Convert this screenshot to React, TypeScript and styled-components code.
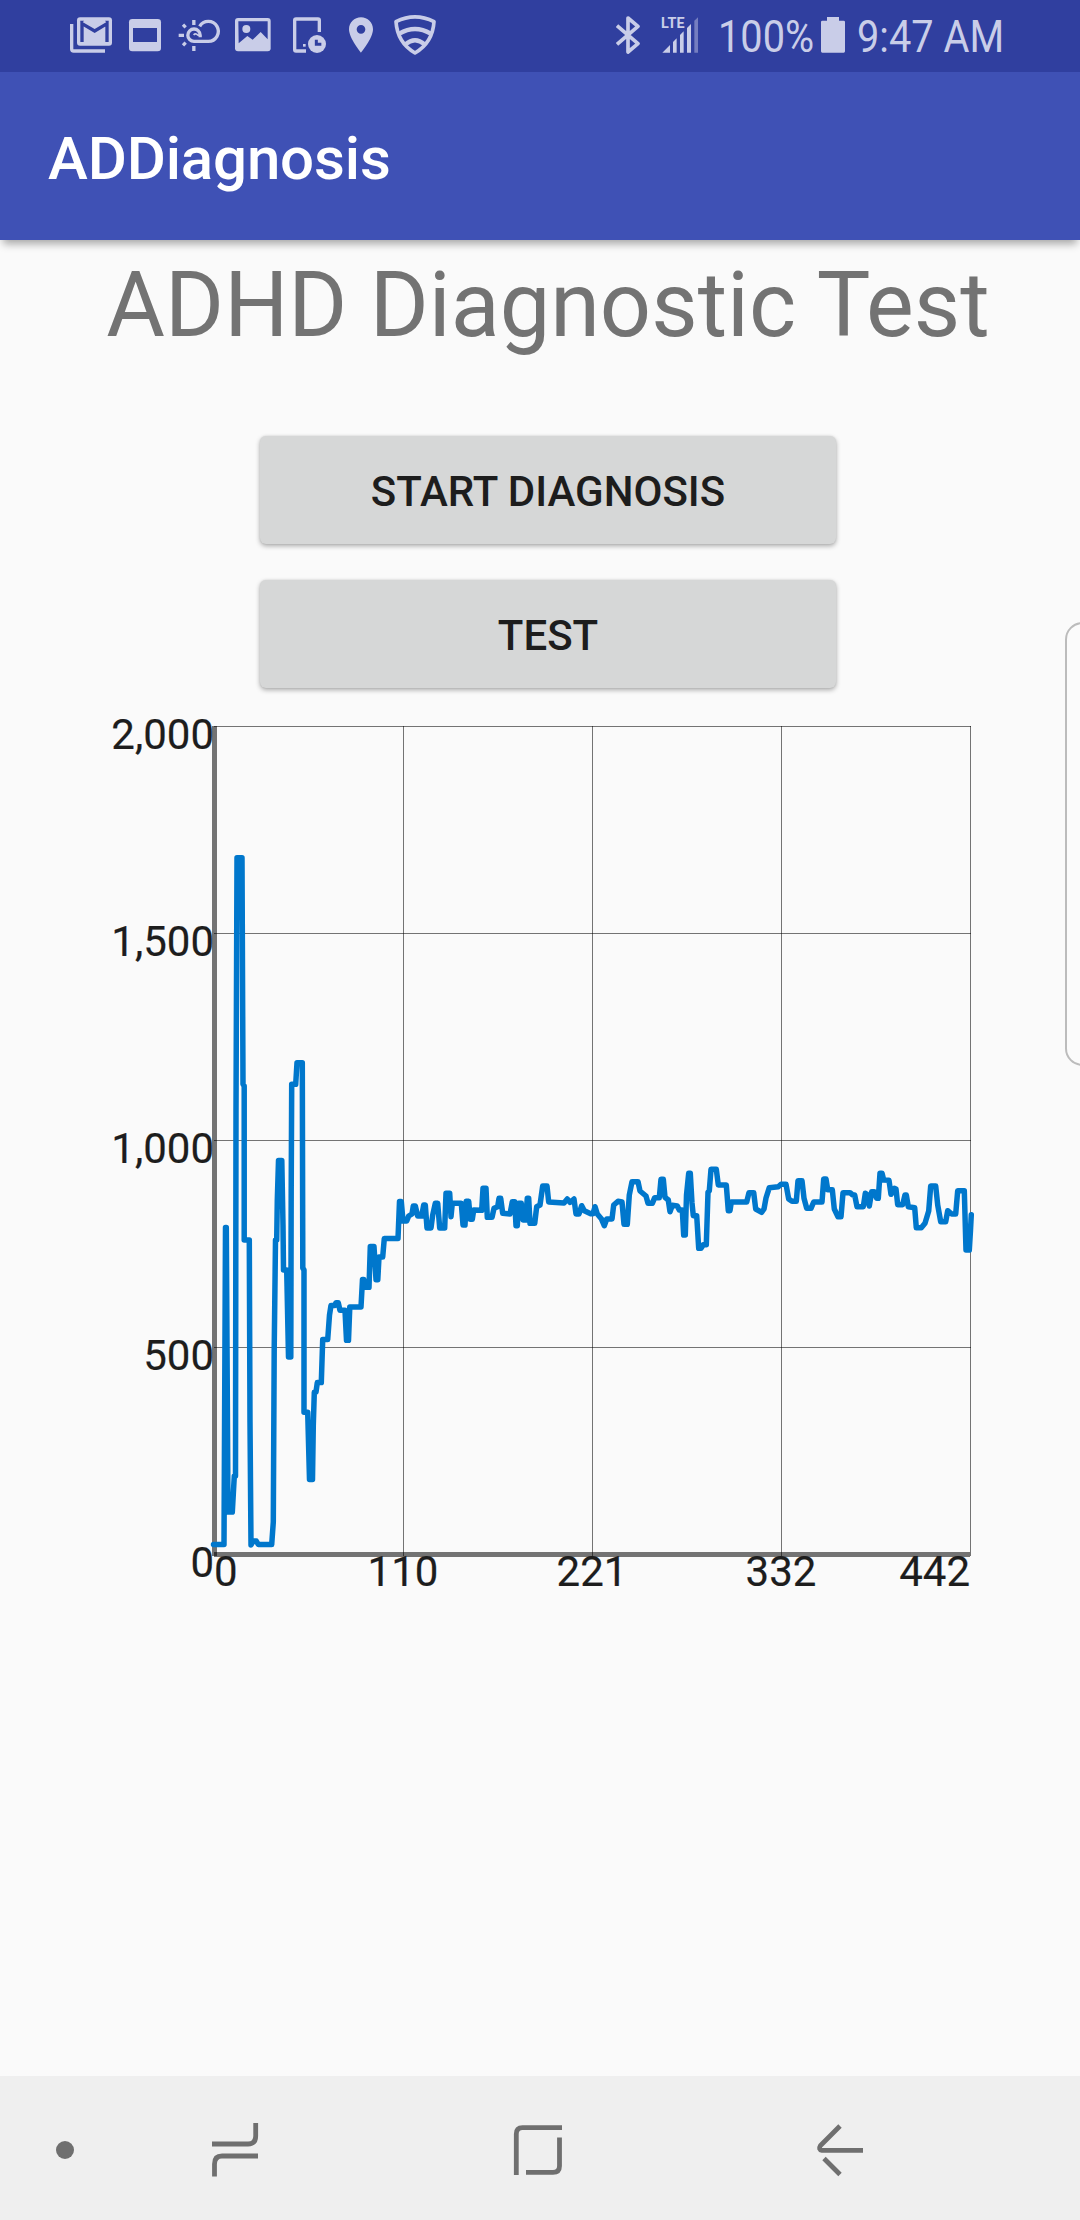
import React from 'react';
import styled, { createGlobalStyle } from 'styled-components';

const GlobalStyle = createGlobalStyle`
  html, body { margin: 0; padding: 0; background: #fafafa; }
  * { box-sizing: border-box; }
`;

const INK = '#c9cde8';
const BAR = '#303f9f';
const NAV_INK = '#6f6f6f';

const Screen = styled.div`
  position: relative;
  display: flex;
  flex-direction: column;
  width: 1080px;
  height: 2220px;
  overflow: hidden;
  background: #fafafa;
  font-family: Roboto, 'Liberation Sans', sans-serif;
`;

const StatusBar = styled.header`
  display: flex;
  justify-content: space-between;
  height: 72px;
  flex: none;
  padding: 0 76px 0 64px;
  background: ${BAR};
  color: ${INK};
`;

const StatusGroup = styled.div`
  display: flex;
  align-items: center;
`;

const StatusIcon = styled.svg<{ $w: number; $gap?: number }>`
  display: block;
  flex: none;
  width: ${(p) => p.$w}px;
  height: 72px;
  margin-left: ${(p) => p.$gap ?? 0}px;
`;

const StatusText = styled.span<{ $w: number; $gap: number }>`
  flex: none;
  width: ${(p) => p.$w}px;
  margin-left: ${(p) => p.$gap}px;
  font-size: 45px;
  line-height: 73px;
  white-space: nowrap;
  transform: scaleX(0.883);
  transform-origin: left center;
`;

const AppBar = styled.div`
  position: relative;
  display: flex;
  align-items: center;
  flex: none;
  height: 168px;
  padding: 5px 48px 0;
  background: #3f51b5;
  box-shadow: 0 7px 8px -3px rgba(0, 0, 0, 0.33);
`;

const AppTitle = styled.h1`
  margin: 0;
  color: #fff;
  font-size: 60px;
  font-weight: 500;
  letter-spacing: -0.15px;
  line-height: 70px;
`;

const Main = styled.main`
  display: flex;
  flex: 1;
  flex-direction: column;
  align-items: center;
  padding: 13px 0 0 16px;
`;

const Headline = styled.h2`
  margin: 0 0 77px;
  color: #737373;
  font-size: 90px;
  font-weight: 400;
  line-height: 106px;
  white-space: nowrap;
`;

const Actions = styled.div`
  display: flex;
  flex-direction: column;
  gap: 36px;
  width: 576px;
`;

const ActionButton = styled.button`
  height: 108px;
  padding: 3px 0 0;
  border: 0;
  border-radius: 6px;
  background: #d6d7d7;
  box-shadow: 0 2px 5px rgba(0, 0, 0, 0.32), 0 0 2px rgba(0, 0, 0, 0.1);
  color: #1d1d1d;
  font-family: inherit;
  font-size: 42px;
  font-weight: 500;
  line-height: 50px;
  text-transform: uppercase;
`;

const ChartSvg = styled.svg`
  display: block;
  width: 896px;
  height: 890px;
  margin-top: 22px;
`;

const AxisLabel = styled.text`
  fill: #1d1d1d;
  stroke: #1d1d1d;
  stroke-width: 0.2px;
  font-family: Roboto, 'Liberation Sans', sans-serif;
  font-size: 42px;
`;

const EdgeHandle = styled.div`
  position: absolute;
  top: 622px;
  right: -20px;
  width: 35px;
  height: 444px;
  border: 2px solid #bcbcbc;
  border-radius: 20px;
  background: #fbfbfb;
`;

const NavBar = styled.nav`
  display: grid;
  grid-template-columns: 74px 10px repeat(3, 302.5px) 1fr;
  align-items: center;
  flex: none;
  height: 144px;
  padding-top: 4px;
  background: #efefef;
`;

const NavDot = styled.span`
  justify-self: end;
  width: 18px;
  height: 18px;
  border-radius: 50%;
  background: ${NAV_INK};
`;

const NavIcon = styled.svg<{ $col: number }>`
  grid-column: ${(p) => p.$col};
  justify-self: center;
  width: 60px;
  height: 60px;
  fill: none;
  stroke: ${NAV_INK};
  stroke-width: 4.8;
`;

const yTicks = [
  { label: '2,000', y: 726 },
  { label: '1,500', y: 933 },
  { label: '1,000', y: 1140 },
  { label: '500', y: 1347 },
  { label: '0', y: 1554 },
];

const xTicks: { label: string; x: number; anchor: 'start' | 'middle' | 'end' }[] = [
  { label: '0', x: 214, anchor: 'start' },
  { label: '110', x: 403, anchor: 'middle' },
  { label: '221', x: 592, anchor: 'middle' },
  { label: '332', x: 781, anchor: 'middle' },
  { label: '442', x: 970, anchor: 'end' },
];

const series = `
213.5,1544.5 224,1544.5 225.5,1227.5 226.3,1227.5 228,1512 232.3,1512 234.3,1476 235.5,1476
236,1110 237,857.7 242,857.7 243,1084 244.2,1086 244.2,1240 249.3,1240 250,1422 251,1545 253.3,1541 256.3,1541 258.3,1544.5
271.7,1544.5 273.3,1522 274.2,1350 275.5,1240 276.7,1240 277.3,1200 278.5,1160.5 281.8,1160.5 283,1225 283.5,1270 286.7,1270
288.5,1357 290.8,1357 291.2,1190 291.7,1084.3 295.7,1084.3 297,1062.7 302.3,1062.7 302.8,1268 304,1270 304,1412.3 307.7,1412.3
309.5,1479.4 312.5,1479.4 313.3,1425 314.3,1392.3 316,1392 317.3,1382.6 321.3,1382.6 322.7,1339.6 327.7,1339.6
329.5,1315 331,1305.5 334.7,1305.5 336,1302.8 338.3,1302.8 340,1310.3 345,1310.3 346.5,1340.3 348.5,1340.3
349.8,1306.9 361,1306.9 362.5,1279.4 363.8,1279.4 365.3,1287.3 369,1287.3 370.3,1246.6 374,1246.6 376,1279.7
377.8,1279.7 379,1257 382.7,1257 384.3,1238.4 398,1238.4 399.5,1201.5 401.3,1201.5 403,1221 406.7,1221
408.7,1216 412,1214 413.3,1206 415.3,1206 417.7,1216 421.7,1216 423.7,1205 425.3,1205 427,1228 431,1228
432.7,1215 435.3,1203.3 437.7,1203.3 439.7,1228 444.7,1228 446,1193.3 449.7,1193.3 451,1216.7 452.3,1203.3
461.3,1203.3 463,1225 465,1225 466.3,1201.3 468.7,1201.3 470.3,1219.3 472.3,1219.3 473.7,1210 481.7,1210.3
483,1188.3 486,1188.3 487.3,1217.3 492,1217.3 494,1208.3 497.7,1206.7 499,1198.3 500.7,1198.3 502.7,1213.3
510,1214 512.3,1201.7 514.7,1201.7 516,1225.7 517.3,1225.7 518.7,1203.3 521.3,1203.3 523,1220 525.7,1220
527.3,1198.3 528.7,1198.3 530,1223.3 534.7,1223.3 536.7,1206.7 540,1205 542.7,1186 547,1186 548.7,1202
564,1203 567.3,1199 570,1202.3 574,1199 576,1214 579,1214 581.7,1205.7 584.3,1210.7 590.7,1213.7 593,1213.7
595,1206.7 597.3,1214 601.3,1218.7 604.3,1225.7 606.7,1219 612,1219 613.7,1205 618,1201.3 622,1202 624,1224.3
627.3,1224.3 629.3,1195 632,1181.7 638,1181.7 640,1191 646,1196 648,1203.3 652.3,1203.3 654.7,1197.7
659.3,1197.7 661,1179.3 663.3,1179.3 665,1197.3 668.3,1200 670,1211.7 672.3,1205.3 677.3,1206 679.3,1210
682.3,1210 683.7,1235 685.3,1235 686.5,1195 688.7,1173.3 690.3,1173.3 692,1203 693.3,1215.7 696.7,1215.7
698.7,1248.3 701,1248.3 703.3,1244.7 706.3,1244.7 708,1192.3 709.3,1190.7 711,1169.3 716.3,1169.3 718.3,1185
726.3,1185 728.3,1210.7 730,1210.7 731.3,1202 746.7,1202 749,1192.7 753.7,1192.7 755.7,1209 761.7,1212.3
764,1209 766,1198 769.3,1187.7 778.3,1186.7 781,1184.3 786,1184.3 788.7,1199 792,1201.3 796.3,1201.3 798,1180.7
802,1180.7 804,1198.3 806.7,1208.3 811,1208.3 813.7,1202 822,1202 823.7,1179 826,1179 827.7,1189.7 832.3,1189.7
834.3,1209 838,1216.7 841,1216.7 843,1192.7 850,1192.7 852.3,1194.7 854.7,1195 857,1206.7 863.3,1206.7
865.3,1193.3 866.7,1194.3 869.3,1206 871.7,1191.7 874.3,1191.7 876.7,1198.3 878.3,1198.3 880,1173.3 882,1173.3
883.7,1180 889,1180.3 891,1194.3 894.3,1188.3 896,1189 897.7,1204.7 902.7,1204.7 905,1195 906.3,1195
908.3,1206.7 914.7,1207.7 916.3,1227.7 921.3,1227.7 925,1223.3 928.7,1211 930.7,1186 935.7,1186 937.7,1205
940.7,1221.7 945.7,1221.7 947.7,1210.7 951.7,1214 955.7,1214 957.7,1190.7 964.3,1190.7 966,1250 969.3,1250
970.5,1230 971.3,1214.7`;

const Chart = () => (
  <ChartSvg viewBox="100 710 896 890">
    <g fill="rgba(0,0,0,0.54)">
      {yTicks.slice(0, 4).map((t) => (
        <rect key={t.label} x={214} y={t.y} width={757} height={1} />
      ))}
      {xTicks.slice(1).map((t) => (
        <rect key={t.label} x={t.x} y={726} width={1} height={830} />
      ))}
      <rect x={212} y={726} width={5} height={830} />
      <rect x={214} y={1552} width={756} height={5} />
    </g>
    {yTicks.map((t) => (
      <AxisLabel key={t.label} x={214} y={t.y + 23} textAnchor="end">
        {t.label}
      </AxisLabel>
    ))}
    {xTicks.map((t) => (
      <AxisLabel key={t.label} x={t.x} y={1586} textAnchor={t.anchor}>
        {t.label}
      </AxisLabel>
    ))}
    <polyline
      points={series}
      fill="none"
      stroke="#0077cc"
      strokeWidth={5.5}
      strokeLinejoin="round"
      strokeLinecap="round"
    />
  </ChartSvg>
);

/* Notification icons share one drawing strip, three units to the pixel. */
const slot = (i: number) => `${72 + 162 * i} 0 162 216`;

const MailIcon = () => (
  <StatusIcon $w={54} viewBox={slot(0)} fill="none">
    <path d="M95 72V147Q95 153 101 153H195" stroke={INK} strokeWidth="10" />
    <rect x="111" y="52" width="105" height="85" rx="9" fill={INK} />
    <path d="M126 126V71L164 93L201 71V126" stroke={BAR} strokeWidth="10" />
    <path d="M121 62L132 62L126 70Z M206 62L195 62L201 70Z" fill={BAR} />
  </StatusIcon>
);

const CalendarIcon = () => (
  <StatusIcon $w={54} viewBox={slot(1)}>
    <rect x="267" y="57" width="96" height="97" rx="10" fill={INK} />
    <rect x="279" y="84" width="72" height="42" fill={BAR} />
  </StatusIcon>
);

const WeatherIcon = () => (
  <StatusIcon $w={54} viewBox={slot(2)} fill="none" stroke={INK} strokeWidth="10">
    <path d="M461.500 60V75M461.500 138V153M416 106H432M429 74L437 82M429 136L437 128" />
    <path d="M479 79A30 30 0 1 1 505 124H462A18.500 18.500 0 1 1 480.500 105.500V112" />
    <path d="M480 105.500H474Q466 98 461 105" strokeWidth="5" />
  </StatusIcon>
);

const ImageIcon = () => (
  <StatusIcon $w={54} viewBox={slot(3)}>
    <rect x="585" y="54" width="107" height="100" rx="9" fill={INK} />
    <path d="M595 64H683V118L662 96L638 119L622 108L596 130Z" fill={BAR} />
    <circle cx="619" cy="87" r="12" fill={INK} />
  </StatusIcon>
);

const DeviceClockIcon = () => (
  <StatusIcon $w={54} viewBox={slot(4)} fill="none" stroke={INK} strokeWidth="10">
    <path d="M798 153H768Q764 153 764 149V61Q764 57 768 57H834Q838 57 838 61V96" />
    <rect x="789" y="132" width="8" height="8" fill={INK} stroke="none" />
    <circle cx="831" cy="132" r="27" fill={INK} stroke="none" />
    <path d="M829 119V133H844" stroke={BAR} strokeWidth="9" />
  </StatusIcon>
);

const PinIcon = () => (
  <StatusIcon $w={54} viewBox={slot(5)}>
    <path
      d="M963 52C943 52 927 68 927 88C927 115 963 158 963 158S999 115 999 88C999 68 983 52 963 52Z M963 101A13 13 0 1 1 963 75A13 13 0 1 1 963 101Z"
      fill={INK}
      fillRule="evenodd"
    />
  </StatusIcon>
);

const ShieldIcon = () => (
  <StatusIcon $w={54} viewBox={slot(6)} fill="none" stroke={INK} strokeWidth="11" strokeLinejoin="round">
    <path d="M1068 65Q1125 36 1182 65Q1178 128 1125 159Q1072 128 1068 65Z" />
    <path d="M1078 101Q1125 73 1172 101" strokeWidth="13" />
    <path d="M1096 133Q1125 108 1154 133" strokeWidth="13" />
  </StatusIcon>
);

const BluetoothIcon = () => (
  <StatusIcon $w={24} viewBox="77 0 72 216" fill="none" stroke={INK} strokeWidth="11" strokeLinejoin="round">
    <path d="M80 77L143 131L113 156V54L143 79L80 133" />
  </StatusIcon>
);

const SignalIcon = () => (
  <StatusIcon $w={38} $gap={21} viewBox="213 0 114 216" fill={INK}>
    <text x="213" y="83" fontSize="43" fontWeight="700" fontFamily="Roboto, sans-serif" textLength="71">
      LTE
    </text>
    <path d="M217 158L240 135V158Z M249 158V126L260 115V158Z M270 158V105L281 94V158Z M291 158V84L303 72V158Z" />
    <path d="M313 158V62L324 52V158Z" opacity="0.45" />
  </StatusIcon>
);

const BatteryIcon = () => (
  <StatusIcon $w={24} $gap={6} viewBox="693 0 72 216" fill={INK}>
    <path d="M711 51H747V62H761Q765 62 765 66V154Q765 158 761 158H697Q693 158 693 154V66Q693 62 697 62H711Z" />
  </StatusIcon>
);

export default function App() {
  return (
    <Screen>
      <GlobalStyle />
      <StatusBar>
        <StatusGroup>
          <MailIcon />
          <CalendarIcon />
          <WeatherIcon />
          <ImageIcon />
          <DeviceClockIcon />
          <PinIcon />
          <ShieldIcon />
        </StatusGroup>
        <StatusGroup>
          <BluetoothIcon />
          <SignalIcon />
          <StatusText $w={97} $gap={19}>100%</StatusText>
          <BatteryIcon />
          <StatusText $w={147} $gap={12}>9:47 AM</StatusText>
        </StatusGroup>
      </StatusBar>
      <AppBar>
        <AppTitle>ADDiagnosis</AppTitle>
      </AppBar>
      <Main>
        <Headline>ADHD Diagnostic Test</Headline>
        <Actions>
          <ActionButton>Start Diagnosis</ActionButton>
          <ActionButton>Test</ActionButton>
        </Actions>
        <Chart />
      </Main>
      <EdgeHandle />
      <NavBar>
        <NavDot />
        <NavIcon $col={3} viewBox="205 2120 60 60">
          <path d="M212 2144H248Q255.700 2144 255.700 2136V2123" />
          <path d="M258 2156H222Q214.500 2156 214.500 2164V2176.500" />
        </NavIcon>
        <NavIcon $col={4} viewBox="507 2120 60 60">
          <path d="M515.300 2175V2134Q515.300 2127.700 521.500 2127.700H561" />
          <path d="M558.500 2137.500V2166Q558.500 2172.300 552 2172.300H525" />
        </NavIcon>
        <NavIcon $col={5} viewBox="810 2120 60 60">
          <path d="M863 2150.300H822Q818 2149.500 820.500 2145.500L840 2126" />
          <path d="M824 2158.500L840 2174.500" />
        </NavIcon>
      </NavBar>
    </Screen>
  );
}
